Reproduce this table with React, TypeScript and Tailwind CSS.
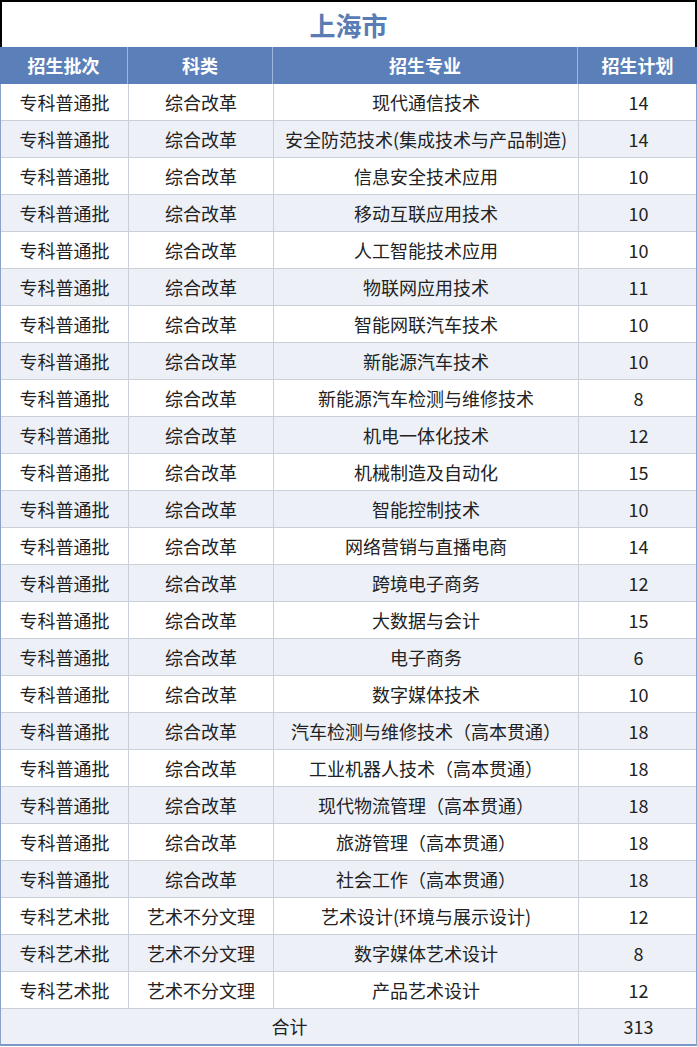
import React from 'react';

const rows: [string, string, string, number][] = [
  ['专科普通批', '综合改革', '现代通信技术', 14],
  ['专科普通批', '综合改革', '安全防范技术(集成技术与产品制造)', 14],
  ['专科普通批', '综合改革', '信息安全技术应用', 10],
  ['专科普通批', '综合改革', '移动互联应用技术', 10],
  ['专科普通批', '综合改革', '人工智能技术应用', 10],
  ['专科普通批', '综合改革', '物联网应用技术', 11],
  ['专科普通批', '综合改革', '智能网联汽车技术', 10],
  ['专科普通批', '综合改革', '新能源汽车技术', 10],
  ['专科普通批', '综合改革', '新能源汽车检测与维修技术', 8],
  ['专科普通批', '综合改革', '机电一体化技术', 12],
  ['专科普通批', '综合改革', '机械制造及自动化', 15],
  ['专科普通批', '综合改革', '智能控制技术', 10],
  ['专科普通批', '综合改革', '网络营销与直播电商', 14],
  ['专科普通批', '综合改革', '跨境电子商务', 12],
  ['专科普通批', '综合改革', '大数据与会计', 15],
  ['专科普通批', '综合改革', '电子商务', 6],
  ['专科普通批', '综合改革', '数字媒体技术', 10],
  ['专科普通批', '综合改革', '汽车检测与维修技术（高本贯通）', 18],
  ['专科普通批', '综合改革', '工业机器人技术（高本贯通）', 18],
  ['专科普通批', '综合改革', '现代物流管理（高本贯通）', 18],
  ['专科普通批', '综合改革', '旅游管理（高本贯通）', 18],
  ['专科普通批', '综合改革', '社会工作（高本贯通）', 18],
  ['专科艺术批', '艺术不分文理', '艺术设计(环境与展示设计)', 12],
  ['专科艺术批', '艺术不分文理', '数字媒体艺术设计', 8],
  ['专科艺术批', '艺术不分文理', '产品艺术设计', 12],
];

const cols = 'grid grid-cols-[128px_145px_305px_119px]';
const cell = 'flex items-center justify-center border-r border-[#c9d0da] last:border-r-0';

export default function App() {
  const total = rows.reduce((s, r) => s + r[3], 0);
  return (
    <div
      className="w-[697px] h-[1047px] bg-white text-[#222] overflow-hidden"
      style={{ fontFamily: '"Noto Sans CJK SC", "Noto Sans", sans-serif' }}
    >
      <div className="h-[47px] border-2 border-b-0 border-black flex items-center justify-center">
        <h1 className="text-[26px] font-bold text-[#5a7cb4] leading-none">上海市</h1>
      </div>

      <div className={`${cols} h-[37px] bg-[#5b80b9] text-white font-bold text-[18px]`}>
        <div className="flex items-center justify-center border-r border-[#9fb6da]">招生批次</div>
        <div className="flex items-center justify-center border-r border-[#9fb6da]">科类</div>
        <div className="flex items-center justify-center border-r border-[#9fb6da]">招生专业</div>
        <div className="flex items-center justify-center">招生计划</div>
      </div>

      <div className="border-x border-[#8aa2c8] text-[18px]">
        {rows.map((r, i) => (
          <div
            key={i}
            className={`${cols} h-[37px] border-b border-[#c9d0da] ${i % 2 === 1 ? 'bg-[#edf1f7]' : 'bg-white'}`}
          >
            <div className={cell}>{r[0]}</div>
            <div className={cell}>{r[1]}</div>
            <div className={`${cell} whitespace-nowrap`}>{r[2]}</div>
            <div className={cell}>{r[3]}</div>
          </div>
        ))}
        <div className="grid grid-cols-[578px_119px] h-[37px] bg-[#edf1f7] border-b-2 border-[#7b98c6]">
          <div className={cell}>合计</div>
          <div className={cell}>{total}</div>
        </div>
      </div>
    </div>
  );
}
